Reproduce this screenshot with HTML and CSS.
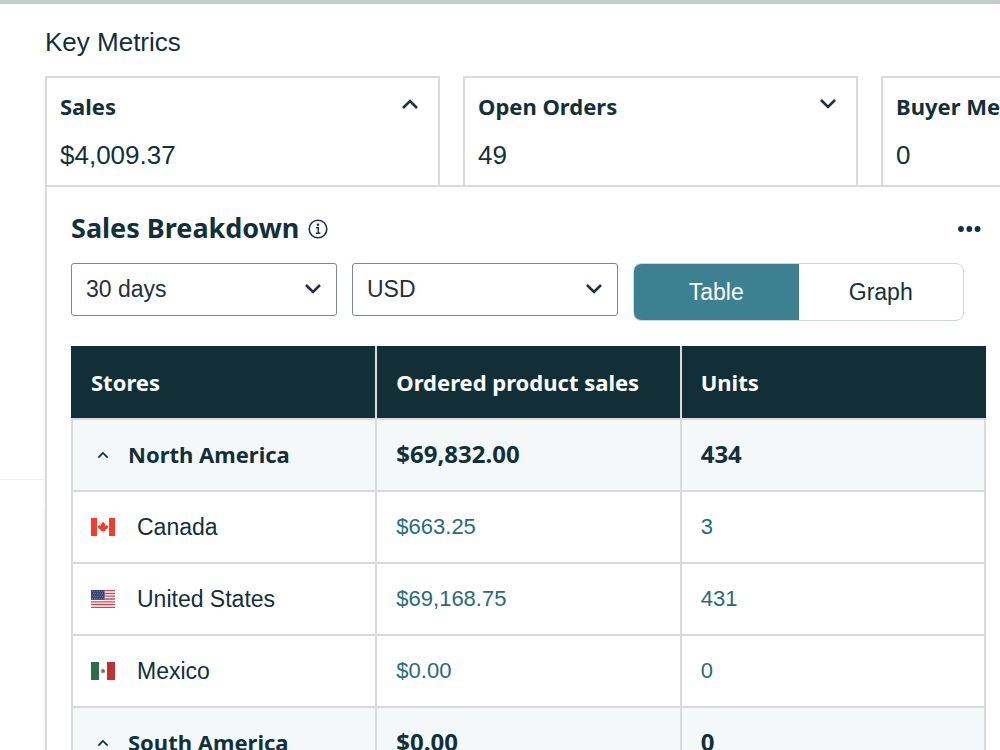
FILE: index.html
```html
<!DOCTYPE html>
<html lang="en">
<head>
<meta charset="utf-8">
<title>Key Metrics</title>
<link rel="stylesheet" href="styles.css">
</head>
<body>
<svg class="symbols" aria-hidden="true">
  <symbol id="chevron-up" viewBox="0 0 18 12"><path d="M2 10 9 3l7 7" fill="none" stroke="currentColor" stroke-width="2.6"/></symbol>
  <symbol id="chevron-down" viewBox="0 0 18 12"><path d="M2 2l7 7 7-7" fill="none" stroke="currentColor" stroke-width="2.6"/></symbol>
</svg>
<div class="page">
  <aside class="rail">
    <div class="rail-top"></div>
    <div class="rail-card"></div>
  </aside>
  <main class="main">
    <h1 class="title">Key Metrics</h1>
    <div class="cards">
      <section class="card">
        <div class="card-head"><h2 class="card-title">Sales</h2>
          <button class="icon-button" type="button" aria-label="Collapse Sales"><svg class="chevron"><use href="#chevron-up"/></svg></button></div>
        <p class="card-value">$4,009.37</p>
      </section>
      <section class="card">
        <div class="card-head"><h2 class="card-title">Open Orders</h2>
          <button class="icon-button" type="button" aria-label="Expand Open Orders"><svg class="chevron"><use href="#chevron-down"/></svg></button></div>
        <p class="card-value">49</p>
      </section>
      <section class="card">
        <div class="card-head"><h2 class="card-title">Buyer Messages</h2></div>
        <p class="card-value">0</p>
      </section>
    </div>
    <section class="panel">
      <div class="panel-head">
        <h2 class="panel-title">Sales Breakdown</h2>
        <button class="icon-button" type="button" aria-label="About Sales Breakdown">
          <svg class="info" viewBox="0 0 20 20"><circle cx="10" cy="10" r="8.8" fill="none" stroke="currentColor" stroke-width="1.6"/><circle cx="10" cy="5.8" r="1.2" fill="currentColor"/><path d="M8 8.8h2.3v5.4M7.8 14.3h4.6" fill="none" stroke="currentColor" stroke-width="1.5"/></svg>
        </button>
        <button class="icon-button more" type="button" aria-label="More options">
          <svg class="dots" viewBox="0 0 24 8" fill="currentColor"><circle cx="4" cy="4" r="2.9"/><circle cx="12.3" cy="4" r="2.9"/><circle cx="20.6" cy="4" r="2.9"/></svg>
        </button>
      </div>
      <div class="toolbar">
        <div class="field">
          <select class="select" aria-label="Period"><option>30 days</option></select>
          <svg class="chevron select-arrow"><use href="#chevron-down"/></svg>
        </div>
        <div class="field">
          <select class="select" aria-label="Currency"><option>USD</option></select>
          <svg class="chevron select-arrow"><use href="#chevron-down"/></svg>
        </div>
        <div class="toggle">
          <button class="toggle-item active" type="button" aria-pressed="true">Table</button>
          <button class="toggle-item" type="button" aria-pressed="false">Graph</button>
        </div>
      </div>
      <table class="table">
        <thead>
          <tr><th scope="col">Stores</th><th scope="col">Ordered product sales</th><th scope="col">Units</th></tr>
        </thead>
        <tbody>
          <tr class="group">
            <th scope="row"><button class="group-toggle" type="button"><svg class="chevron-small"><use href="#chevron-up"/></svg>North America</button></th>
            <td>$69,832.00</td><td>434</td>
          </tr>
          <tr>
            <th scope="row"><span class="store"><svg class="flag" viewBox="0 0 24 18"><path fill="#fff" d="M0 0h24v18H0z"/><path fill="#f03d2d" d="M0 0h6v18H0zM18 0h6v18h-6zM12 3.6l1.3 2.2 1.2-.6-.5 3.2 1.6-1.6.4.9 1.2-.1-.5 1.6.6.5-3.1 2.4.2 1-2-.2V14.6h-.8v-1.7l-2 .2.2-1-3.1-2.4.6-.5-.5-1.6 1.2.1.4-.9L10 8.4l-.5-3.2 1.2.6z"/></svg>Canada</span></th>
            <td><a href="#">$663.25</a></td><td><a href="#">3</a></td>
          </tr>
          <tr>
            <th scope="row"><span class="store"><svg class="flag" viewBox="0 0 24 18"><path fill="#fff" d="M0 0h24v18H0z"/><path stroke="#c94a55" stroke-width="1.3" d="M0 .7h24M0 3.5h24M0 6.2h24M0 9h24M0 11.8h24M0 14.5h24M0 17.3h24"/><path fill="#36406f" d="M0 0h13.5v9.7H0z"/><path stroke="#98a0bd" stroke-width=".8" stroke-dasharray=".8 1.5" d="M1 1.5h12M2 3.2h11M1 4.9h12M2 6.6h11M1 8.3h12"/></svg>United States</span></th>
            <td><a href="#">$69,168.75</a></td><td><a href="#">431</a></td>
          </tr>
          <tr>
            <th scope="row"><span class="store"><svg class="flag" viewBox="0 0 24 18"><path fill="#fff" d="M0 0h24v18H0z"/><path fill="#2d6b4a" d="M0 0h8v18H0z"/><path fill="#c03038" d="M16 0h8v18h-8z"/><path fill="#a99a72" d="M9.6 8.2l1.4-1.4 2 .2 1.3 1.4-.6 2.3-1.7.8-1.8-.8z"/><path fill="#756744" d="M11 7.8l2 .3.5 1.7-1.8.4z"/></svg>Mexico</span></th>
            <td><a href="#">$0.00</a></td><td><a href="#">0</a></td>
          </tr>
          <tr class="group">
            <th scope="row"><button class="group-toggle" type="button"><svg class="chevron-small"><use href="#chevron-up"/></svg>South America</button></th>
            <td>$0.00</td><td>0</td>
          </tr>
        </tbody>
      </table>
    </section>
  </main>
</div>
</body>
</html>
```
FILE: styles.css
```css
:root {
  --ink: #12303a;
  --navy: #252f3e;
  --line: #d9dbdb;
  --teal: #3c8091;
  --link: #2a6a7b;
  --display: "Noto Sans", sans-serif;
}
* { box-sizing: border-box; }
html { overflow: hidden; }
body {
  margin: 0;
  background: #fff;
  color: var(--ink);
  font: 23px/32px "Liberation Sans", Arial, sans-serif;
}
h1, h2, p { margin: 0; }
button { font: inherit; color: inherit; background: none; border: 0; padding: 0; }
a { color: var(--link); text-decoration: none; }
svg { display: block; flex: none; }
.symbols { position: absolute; width: 0; height: 0; }
.page {
  display: grid;
  grid-template-columns: 45px minmax(0, 1fr);
  border-top: 4px solid #c3cccd;
}
.rail { display: flex; flex-direction: column; }
.rail-top { height: 476px; border-bottom: 1px solid #f2f2f2; }
.rail-card {
  height: 212px;
  margin-top: 28px;
  background: linear-gradient(to left, #f6f6f6, #fff 4px);
}
.main { overflow: hidden; }
.title { padding: 22px 0 18px; font-size: 26px; font-weight: 400; }
.cards {
  display: grid;
  grid-template-columns: repeat(3, 395px);
  gap: 23px;
}
.card {
  height: 109px;
  padding: 14px 19px 0 13px;
  border: 2px solid var(--line);
  border-bottom: 0;
}
.card-head { display: flex; justify-content: space-between; }
.card-title { font: 700 22px/28px var(--display); white-space: nowrap; }
.card-value { padding-top: 19px; font-size: 26px; }
.icon-button { display: flex; color: var(--navy); }
.chevron { width: 18px; height: 12px; color: var(--navy); }
.card .chevron { margin-top: 6px; }
.panel {
  padding: 23px 14px 0 24px;
  border-top: 2px solid var(--line);
  border-left: 2px solid var(--line);
}
.panel-head { display: flex; align-items: center; gap: 9px; height: 38px; }
.panel-title { font: 700 27px/36px var(--display); padding-bottom: 2px; }
.info { width: 20px; height: 20px; }
.more { margin-left: auto; margin-right: 5px; color: var(--ink); }
.dots { width: 24px; height: 8px; }
.toolbar {
  display: grid;
  grid-template-columns: 266fr 266fr 331fr;
  gap: 15px;
  align-items: start;
  padding: 15px 22px 25px 0;
}
.field { position: relative; }
.select {
  appearance: none;
  display: block;
  width: 100%;
  height: 53px;
  padding: 0 40px 2px 14px;
  border: 1px solid #7c8791;
  border-radius: 3px;
  background: #fff;
  color: var(--navy);
  font: inherit;
}
.select-arrow { position: absolute; right: 15px; top: 20px; pointer-events: none; }
.toggle {
  display: flex;
  height: 58px;
  border: 1px solid #d0d7d7;
  border-radius: 8px;
  overflow: hidden;
}
.toggle-item { flex: 1; }
.toggle-item.active { background: var(--teal); color: #fff; }
.table {
  width: 100%;
  table-layout: fixed;
  border-collapse: collapse;
}
.table th, .table td {
  height: 72px;
  padding: 0 18px 0 19px;
  border: 2px solid var(--line);
  text-align: left;
  font-weight: 400;
}
.table th:first-child { padding-left: 18px; }
.table td { font-size: 22px; }
.table thead th {
  padding-bottom: 3px;
  background: #122f37;
  border-top-color: #122f37;
  color: #fff;
  font: 700 22px/32px var(--display);
}
.table thead th:first-child { border-left-color: #122f37; }
.table thead th:last-child { border-right-color: #122f37; }
.table .group { background: #f4f8f9; }
.table .group th, .table .group td { padding-bottom: 3px; font: 700 22px/32px var(--display); }
.table .group td { font-size: 24px; }
.group-toggle { display: flex; align-items: center; gap: 19px; padding-left: 6px; white-space: nowrap; }
.chevron-small { width: 12px; height: 8px; margin-top: 2px; }
.store { display: flex; align-items: center; gap: 22px; }
.flag { width: 24px; height: 18px; }
```
